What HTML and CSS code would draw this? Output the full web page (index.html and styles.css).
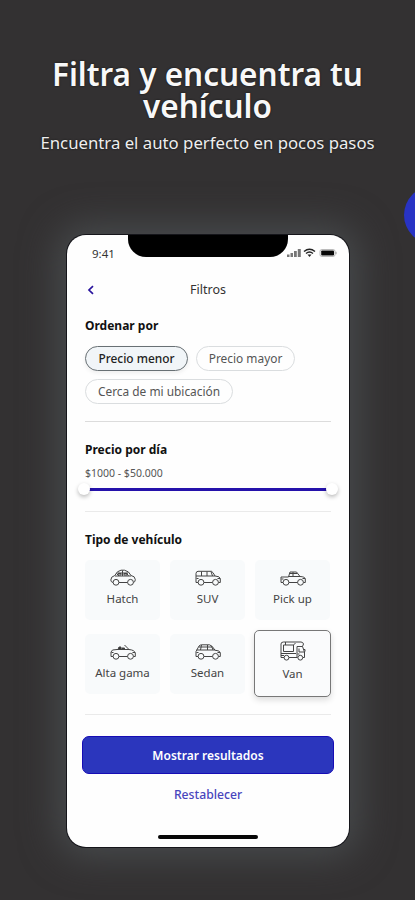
FILE: index.html
```html
<!DOCTYPE html>
<html lang="es">
<head>
<meta charset="utf-8">
<title>Filtros</title>
<link rel="stylesheet" href="styles.css">
</head>
<body>
<svg class="accent" width="11" height="60" viewBox="0 0 11 60"><circle cx="29" cy="30" r="29" fill="#2833c4"/></svg>
<header class="hero">
  <h1>Filtra y encuentra tu<br>vehículo</h1>
  <p>Encuentra el auto perfecto en pocos pasos</p>
</header>
<main class="phone">
  <div class="notch"></div>
  <div class="status">
    <span class="time">9:41</span>
    <svg class="status-icons" width="50" height="12" viewBox="0 0 50 12">
      <g fill="#777"><path d="M0 7.500h2.500V10H0zM3.500 6H6v4H3.500zM7 4h2.800v6H7zM10.800 2h3v8h-3z"/></g>
      <g fill="none" stroke="#222" stroke-width="1.500"><path d="M17 4.500q5.500-4.500 11 0M19 6.500q3.500-2.800 7 0"/></g><path d="M20.500 7.500h4l-2 2.500z" fill="#222"/>
      <rect x="33" y="2.500" width="15" height="7" rx="1.800" fill="none" stroke="#aaa" stroke-width=".8"/><rect x="34.200" y="3.500" width="12.800" height="5" rx=".8" fill="#080808"/><path d="M49 4.800v2.400" stroke="#999"/>
    </svg>
  </div>
  <nav class="bar">
    <svg class="back" width="8" height="10" viewBox="0 0 8 10"><path d="M6 1.200 2 5l4 3.800"/></svg>
    <span>Filtros</span>
  </nav>
  <section class="order">
    <h2>Ordenar por</h2>
    <div class="chips">
      <span class="chip chip-a on">Precio menor</span>
      <span class="chip chip-b">Precio mayor</span>
      <span class="chip chip-c">Cerca de mi ubicación</span>
    </div>
  </section>
  <section class="price">
    <h2>Precio por día</h2>
    <p>$1000 - $50.000</p>
    <div class="slider"><i></i><i></i></div>
  </section>
  <section class="types">
    <h2>Tipo de vehículo</h2>
    <div class="grid">
      <div class="card">
        <svg class="icon" viewBox="0 0 26 18"><path d="M3 13.500Q.8 13 .8 11q0-3.500 4-4.500Q7 1.800 11 1.200h3.500Q19 2 21 6.500q4 .5 4.300 4 0 2.500-1.800 3M9 13.500h8.500M5 7h16M7.500 4h10.500M12.500 1.500V7M6.500 4.500l2.500 2.500M16.500 4l2 3"/><path d="M8 4.500h3V6H8zM14 4.500h3V6h-3z"/><circle cx="6" cy="13.300" r="2.900"/><circle cx="20.500" cy="13.300" r="2.900"/></svg>
        <span>Hatch</span>
      </div>
      <div class="card">
        <svg class="icon" viewBox="0 0 26 18"><path d="M3 13.500H1V4.500q.2-2.200 2-2.200h13.500q1.500.7 3.500 4.700 5 .3 5.300 2.500v4h-1.800M9 13.500h8.500M1 7h19M6.500 2.500V7M12 2.500V7M16 2.500 17.500 7M1.500 9.500h2M22.500 9.500h2.500"/><circle cx="6" cy="13.300" r="2.900"/><circle cx="20.500" cy="13.300" r="2.900"/></svg>
        <span>SUV</span>
      </div>
      <div class="card">
        <svg class="icon" viewBox="0 0 26 18"><path d="M3 13.500H1V8h7.500L10 3h6.500L20 7.500q5 .2 5.300 2.500v3.500h-1.800M9 13.500h8.500M8.500 7.500H20M13 3v4.500M1.500 10h2M22.500 9.500h2.500M10 4.500h7"/><circle cx="6" cy="13.300" r="2.900"/><circle cx="20.500" cy="13.300" r="2.900"/></svg>
        <span>Pick up</span>
      </div>
      <div class="card">
        <svg class="icon" viewBox="0 0 26 18"><path d="M3 13.500H1V9L2.500 7 7 6.500h12q5.500.5 6.300 3.500v3.500h-1.800M9 13.500h8.500M1.500 9.500h2M14.500 2l4.500 4.500M22.500 9.500h2.500"/><path d="M8 6.500 9 4h2v2.500zM12 6.500V5h2.500v1.500z" fill="#333"/><circle cx="6" cy="13.300" r="2.900"/><circle cx="20.500" cy="13.300" r="2.900"/></svg>
        <span>Alta gama</span>
      </div>
      <div class="card">
        <svg class="icon" viewBox="0 0 26 18"><path d="M3 13.500H1V8.500L4 3q1-1.200 3-1.200h7.500q2.500.4 5.500 5.400 5 .3 5.300 2.500v3.800h-1.800M9 13.500h8.500M1.500 7H20M6.500 2 5.500 7M12.500 2v5M16.500 3 18 7M4 4h13M1.500 9.500h2M22.500 9.500h2.500"/><circle cx="6" cy="13.300" r="2.900"/><circle cx="20.500" cy="13.300" r="2.900"/></svg>
        <span>Sedan</span>
      </div>
      <div class="card on">
        <svg class="icon van" viewBox="0 0 26 20"><path d="M4 16.500H1V3Q1 1 3.500 1H21q2 0 2.500 2l-1 2.500h-5.500v11M9 16.500h8.500M3.500 4h10v6.500h-10zM5.500 1v3M13.500 4l2-2M22.500 5.500 24.500 11v5.500h-1.500M1 12.500h15M19 7.500V11h5.500M1 14.500h3M17.500 13h2M23.500 8.500h1.500v2"/><circle cx="6.500" cy="16.700" r="2.400"/><circle cx="20.300" cy="16.700" r="2.400"/></svg>
        <span>Van</span>
      </div>
    </div>
  </section>
  <footer>
    <button class="primary">Mostrar resultados</button>
    <a class="reset">Restablecer</a>
    <div class="home"></div>
  </footer>
</main>
</body>
</html>
```
FILE: styles.css
```css
* { box-sizing: border-box; margin: 0; padding: 0; }
html { overflow: hidden; background: #333132; }
body { width: 415px; height: 900px; overflow: hidden; position: relative; background: #333132; font-family: "Noto Sans", "Open Sans", sans-serif; color: #111; }
.accent { position: absolute; right: 0; top: 185px; }
.hero { height: 235px; padding-top: 58px; text-align: center; color: #f8f8f8; }
.hero h1 { font-size: 31.500px; line-height: 32px; font-weight: 600; white-space: nowrap; text-shadow: 0 0 2px #111; }
.hero p { margin-top: 10px; font-size: 16.750px; line-height: 22px; white-space: nowrap; color: #eee; text-shadow: 0 0 2px #111; }
.phone { position: relative; width: 282px; height: 612px; margin-left: 67px; border-radius: 19px; background: #fefefe; box-shadow: 0 0 0 1px #15151a, 0 0 36px 10px #484b4d; }
.notch { position: absolute; left: 61px; top: 0; width: 160px; height: 22px; border-radius: 0 0 18px 18px; background: #000; }
.status { display: flex; justify-content: space-between; align-items: center; height: 36px; padding: 0 12px 0 25px; }
.time { font-size: 11.500px; color: #333; }
.bar { display: flex; align-items: center; justify-content: center; position: relative; height: 37px; font-size: 12.500px; color: #333; }
.back { position: absolute; left: 20px; top: 14px; fill: none; stroke: #29149d; stroke-width: 1.700; }
h2 { font-size: 12px; line-height: 16px; font-weight: 700; white-space: nowrap; }
.order { height: 114px; margin: 0 18px; padding-top: 10px; border-bottom: 1px solid #dcdcdc; }
.chips { display: flex; flex-wrap: wrap; gap: 8px; margin-top: 12px; }
.chip { height: 25px; border: 1px solid #dadddf; border-radius: 13px; line-height: 23px; text-align: center; white-space: nowrap; font-size: 11.900px; color: #555; }
.chip.on { border-color: #687074; background: #f1f5f8; color: #222; font-weight: 500; box-shadow: 0 2px 4px #0001; }
.chip-a { width: 103px; }
.chip-b { width: 99px; }
.chip-c { width: 148px; }
.price { height: 90px; margin: 0 18px; padding-top: 20px; border-bottom: 1px solid #eaeaea; }
.price p { margin-top: 7px; font-size: 10.500px; line-height: 16px; color: #555; }
.slider { display: flex; justify-content: space-between; align-items: center; width: 260px; height: 12px; margin: 2px 0 0 -7px; background: linear-gradient(#2512ab, #2512ab) center / 240px 3px no-repeat; }
.slider i { width: 12px; height: 12px; border-radius: 50%; background: #fff; box-shadow: 0 2px 4px #0004; }
.types { height: 203px; margin: 0 18px; padding-top: 20px; border-bottom: 1px solid #eaeaea; }
.grid { display: grid; grid-template-columns: repeat(3, 75px); gap: 14px 10px; margin-top: 12px; }
.card { height: 60px; padding-top: 9px; border-radius: 5px; background: #f8fafb; display: flex; flex-direction: column; align-items: center; font-size: 11.500px; line-height: 16px; color: #444; }
.card span { margin-top: 4px; white-space: nowrap; }
.card.on { width: 77px; height: 67px; margin: -4px 0 -3px -1px; padding-top: 10px; border: 1px solid #777; background: #fafbfc; box-shadow: 0 3px 6px #0002; }
.icon { width: 26px; height: 18px; fill: none; stroke: #444; stroke-width: 1; stroke-linejoin: round; }
.van { height: 20px; }
.card.on span { margin-top: 5px; }
footer { display: flex; flex-direction: column; align-items: center; padding-top: 21px; }
.primary { width: 252px; height: 38px; border: 1px solid #160cb5; border-radius: 7px; background: #2b36bd; color: #fff; font: 600 12px "Noto Sans", sans-serif; }
.reset { margin-top: 13px; font-size: 12.200px; line-height: 16px; font-weight: 500; color: #4845bd; }
.home { width: 100px; height: 4px; margin-top: 32px; border-radius: 2px; background: #070707; }
```
